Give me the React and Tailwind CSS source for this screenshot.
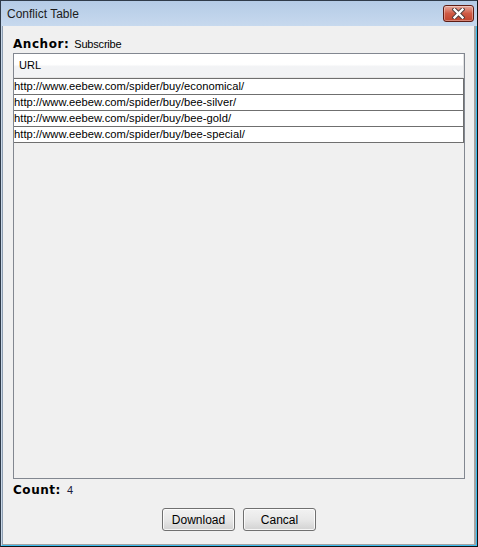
import React from "react";

const urls = [
  "http://www.eebew.com/spider/buy/economical/",
  "http://www.eebew.com/spider/buy/bee-silver/",
  "http://www.eebew.com/spider/buy/bee-gold/",
  "http://www.eebew.com/spider/buy/bee-special/",
];

function CloseButton() {
  return (
    <div className="w-[31px] h-[17px] rounded-[3px] border border-[#5e1c14] bg-gradient-to-b from-[#e6a89c] via-[#cf5a45] to-[#c0432d] flex items-center justify-center shadow-[inset_0_0_0_1px_rgba(255,255,255,0.35)]">
      <svg width="13" height="11" viewBox="0 0 13 11">
        <path d="M2.5 1.5 L10.5 9.5 M10.5 1.5 L2.5 9.5" stroke="#4a3a3a" strokeWidth="4.2" strokeLinecap="square" fill="none" />
        <path d="M2.5 1.5 L10.5 9.5 M10.5 1.5 L2.5 9.5" stroke="#ffffff" strokeWidth="2.4" strokeLinecap="square" fill="none" />
      </svg>
    </div>
  );
}

function Button({ children }) {
  return (
    <div className="w-[73px] h-[23px] rounded-[3px] border border-[#707070] bg-gradient-to-b from-[#f2f2f2] via-[#e8e8e8] to-[#d2d2d2] shadow-[inset_0_0_0_1px_rgba(255,255,255,0.8)] flex items-center justify-center text-[12px] text-black">
      {children}
    </div>
  );
}

export default function App() {
  return (
    <div
      className="w-[478px] h-[547px] flex flex-col border border-[#2f3b4a] border-r-[#111111] border-b-[#111111] bg-[#f0f0f0]"
      style={{ fontFamily: '"Liberation Sans", Arial, sans-serif' }}
    >
      {/* title bar */}
      <div className="h-[25px] shrink-0 flex items-center justify-between pl-[6px] pr-[3px] bg-gradient-to-b from-[#b4cbe6] to-[#c7d9ee]">
        <span className="text-[12px] text-[#1b1b1b] leading-none">Conflict Table</span>
        <CloseButton />
      </div>

      {/* body frame */}
      <div className="flex-1 flex border-l border-l-[#c8d7e8] border-r border-r-[#3bbcef] border-b border-b-[#3bbcef]">
        <div className="flex-1 flex flex-col border-l border-l-[#8f9fb2] border-r-2 border-r-[#a3a3a3] border-b border-b-[#a3a3a3] bg-[#f0f0f0]">
          {/* anchor row */}
          <div className="mt-[11px] ml-[10px] h-[14px] flex items-center gap-[5px]">
            <span
              className="text-[12px] font-bold tracking-[0.55px] text-black leading-none"
              style={{ fontFamily: '"DejaVu Sans", Verdana, sans-serif' }}
            >
              Anchor:
            </span>
            <span className="text-[11px] text-black leading-none tracking-[-0.2px]">Subscribe</span>
          </div>

          {/* table */}
          <div className="mt-[2px] ml-[10px] w-[452px] h-[426px] border border-[#828790] bg-[#f0f0f0] flex flex-col">
            <div className="h-[24px] shrink-0 flex items-center pl-[5px] border-r border-r-[#e2e2e2] border-b border-b-[#e6e6e6] bg-gradient-to-b from-[#ffffff] from-45% to-[#f2f3f5] to-55%">
              <span className="text-[11px] text-black">URL</span>
            </div>
            <div className="flex flex-col">
              {urls.map((u, i) => (
                <div
                  key={u}
                  className={
                    "h-[16px] bg-white border-t border-r border-[#6f6f6f] flex items-center text-[11.2px] tracking-[0.03px] text-black leading-none whitespace-nowrap " +
                    (i === urls.length - 1 ? "h-[17px] border-b" : "")
                  }
                >
                  {u}
                </div>
              ))}
            </div>
          </div>

          {/* count row */}
          <div className="mt-[4px] ml-[10px] h-[14px] flex items-center gap-[6px]">
            <span
              className="text-[12px] font-bold tracking-[0.55px] text-black leading-none"
              style={{ fontFamily: '"DejaVu Sans", Verdana, sans-serif' }}
            >
              Count:
            </span>
            <span className="text-[11px] text-[#1c1c3c] leading-none">4</span>
          </div>

          {/* buttons */}
          <div className="mt-[11px] flex justify-center gap-[8px] pl-[1px]">
            <Button>Download</Button>
            <Button>Cancal</Button>
          </div>
        </div>
      </div>
    </div>
  );
}
